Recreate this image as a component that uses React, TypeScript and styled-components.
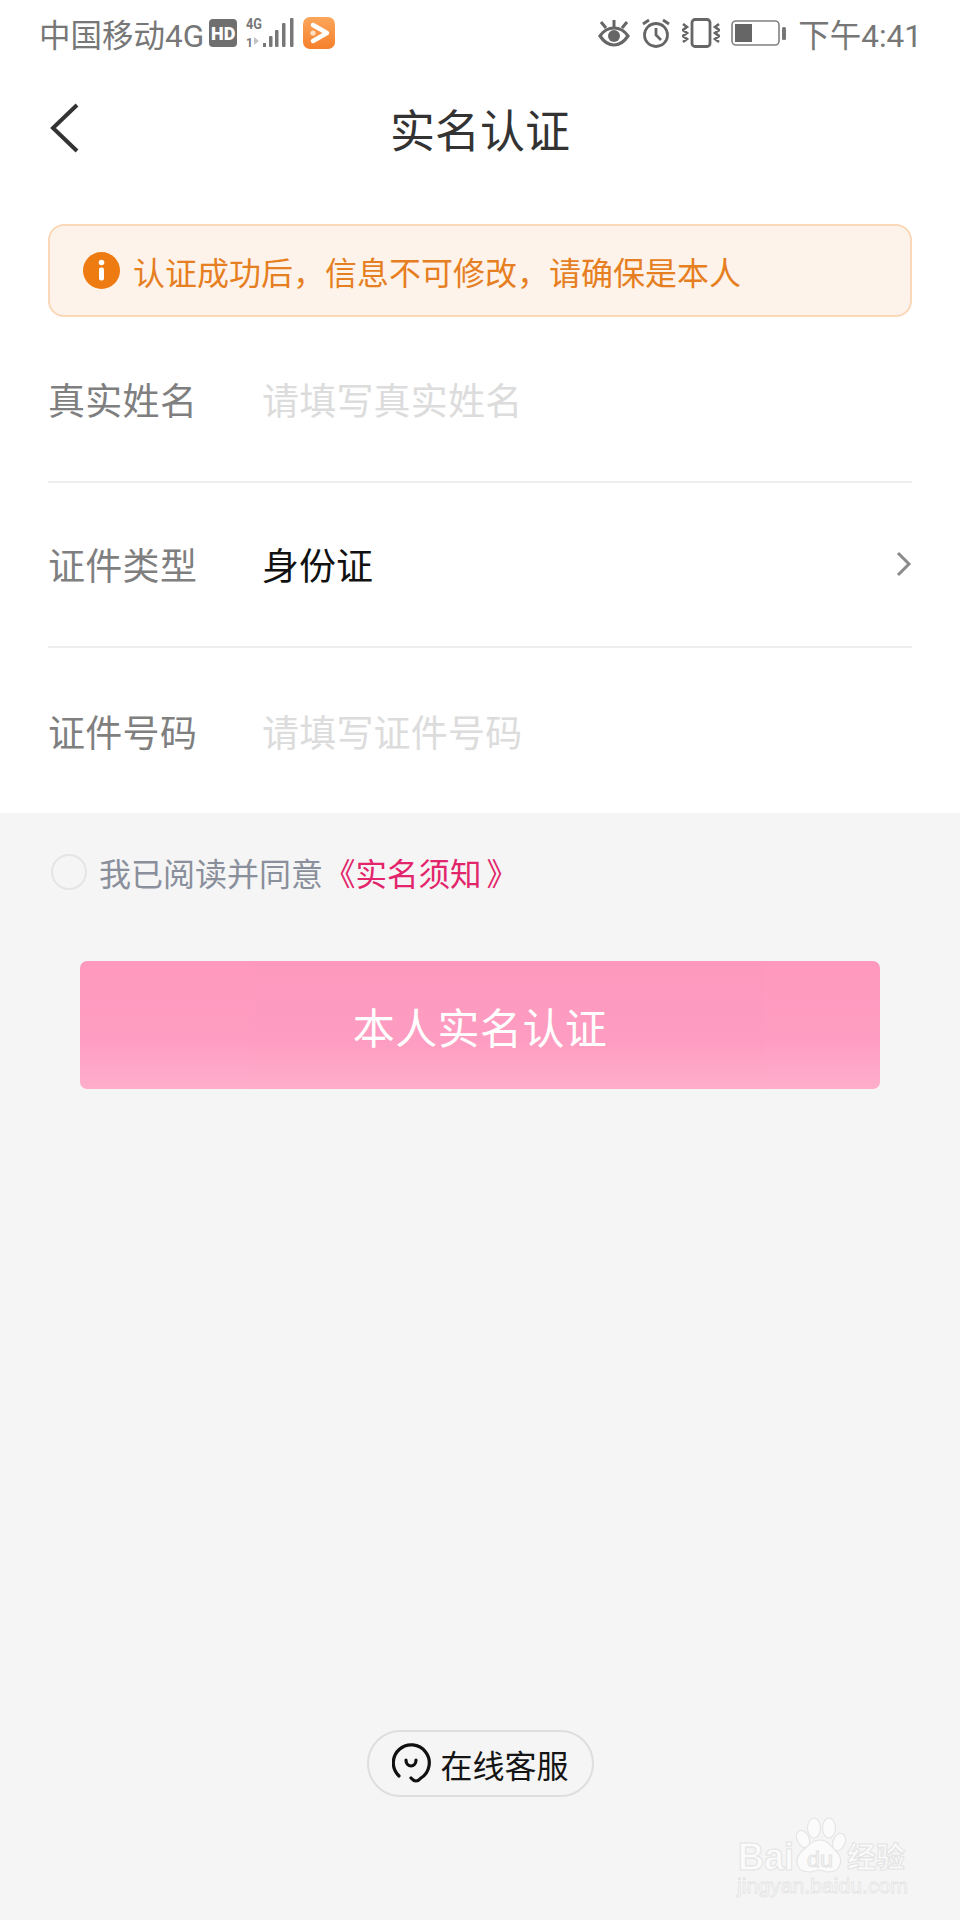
import styled, { createGlobalStyle } from 'styled-components'

const GlobalStyle = createGlobalStyle`
  html, body {
    margin: 0;
    padding: 0;
    background: #f5f5f5;
  }
  * {
    box-sizing: border-box;
  }
`

const Page = styled.div`
  position: relative;
  display: flex;
  flex-direction: column;
  width: 960px;
  height: 1920px;
  overflow: hidden;
  background: #f5f5f5;
  font-family: 'Roboto', 'Noto Sans CJK SC', sans-serif;
`
const FormPanel = styled.div`
  background: #fff;
  height: 813px;
`
const StatusBar = styled.div`
  display: flex;
  align-items: center;
  justify-content: space-between;
  height: 66px;
  padding: 0 38px 0 39px;
  color: #777;
  font-size: 31.5px;
`
const StatusGroup = styled.div<{ $gap: number }>`
  display: flex;
  align-items: center;
  gap: ${(props) => props.$gap}px;
`
const Carrier = styled.span`
  margin-right: -3px;
`
const HdBadge = styled.span`
  display: flex;
  align-items: center;
  justify-content: center;
  width: 28px;
  height: 28px;
  border-radius: 4px;
  background: #6f6f6f;
  color: #fff;
  font-size: 18px;
  font-weight: 900;
`
const AppBadge = styled.span`
  display: flex;
  align-items: center;
  justify-content: center;
  width: 32px;
  height: 32px;
  border-radius: 7px;
  background: linear-gradient(180deg, #fba65c, #f6802c);
`
const NavBar = styled.div`
  position: relative;
  display: flex;
  align-items: center;
  justify-content: center;
  height: 124px;
`
const BackIcon = styled.svg`
  position: absolute;
  left: 48px;
  top: 35px;
  width: 34px;
  height: 54px;
`
const Title = styled.h1`
  margin: 0;
  color: #333;
  font-size: 45px;
  font-weight: 400;
`
const Notice = styled.div`
  display: flex;
  align-items: center;
  gap: 13px;
  height: 93px;
  margin: 34px 48px 0;
  padding-left: 33px;
  border: 2px solid #fad8b8;
  border-radius: 16px;
  background: #fef3ea;
  color: #e67f22;
  font-size: 32px;
`
const Row = styled.div<{ $last?: boolean }>`
  display: flex;
  align-items: center;
  height: 165.5px;
  margin: 0 48px;
  border-bottom: ${(props) => (props.$last ? 'none' : '2px solid #eeeeee')};
`
const Label = styled.span`
  width: 214px;
  color: #7f7f7f;
  font-size: 37px;
  letter-spacing: 0.3px;
`
const Placeholder = styled.span`
  color: #dcdcdc;
  font-size: 37px;
  letter-spacing: 0.2px;
`
const Value = styled.span`
  flex: 1;
  color: #111;
  font-size: 37px;
`
const Agreement = styled.div`
  display: flex;
  align-items: center;
  gap: 12px;
  height: 36px;
  margin: 41px 0 0 51px;
  font-size: 32px;
  color: #8a8f9c;
`
const Radio = styled.span`
  width: 36px;
  height: 36px;
  border: 2px solid #e5e5e5;
  border-radius: 50%;
`
const AgreementLink = styled.span`
  margin-left: -11px;
  color: #e3256b;
  font-size: 31.5px;
`
const ClosingMark = styled.span`
  margin-left: 5px;
`
const SubmitButton = styled.button`
  display: block;
  width: 800px;
  height: 128px;
  margin: 71px auto 0;
  padding: 0;
  border: none;
  border-radius: 7px;
  background: linear-gradient(180deg, #ff97bc 0%, #ff9bc0 60%, #ffaccb 100%);
  color: #fff;
  font-family: inherit;
  font-size: 42px;
  letter-spacing: 0.4px;
  opacity: 0.98;
`
const ServiceButton = styled.div`
  display: flex;
  align-items: center;
  gap: 9px;
  width: 227px;
  height: 67px;
  margin: auto auto 123px;
  padding-left: 23px;
  border: 2px solid #dedede;
  border-radius: 34px;
  color: #151515;
  font-size: 32px;
`
const Watermark = styled.svg`
  position: absolute;
  right: 40px;
  bottom: 0;
  width: 195px;
  height: 110px;
`

const SignalIcon = () => (
  <svg width="50" height="34" viewBox="0 0 50 34">
    <text x="1" y="13" fontSize="15" fontWeight="700" fill="#777" fontFamily="Roboto" textLength="16" lengthAdjust="spacingAndGlyphs">4G</text>
    <text x="1" y="31" fontSize="12" fontWeight="700" fill="#777" fontFamily="Roboto">1</text>
    <path d="M9 21l5 4-5 4z" fill="#c4c4c4" />
    <rect x="18" y="27" width="3" height="4" fill="#777" />
    <rect x="24" y="20" width="3.500" height="11" rx="1" fill="#777" />
    <rect x="30" y="14" width="3.500" height="17" rx="1" fill="#777" />
    <rect x="37" y="7" width="3.500" height="24" rx="1" fill="#777" />
    <rect x="45" y="2" width="3.500" height="29" rx="1" fill="#777" />
  </svg>
)

const PlayIcon = () => (
  <svg width="24" height="24" viewBox="0 0 24 24" fill="none">
    <path d="M6 4l14 8-14 8" stroke="#fff" strokeWidth="4.500" strokeLinejoin="round" strokeLinecap="round" />
    <circle cx="6" cy="12" r="2.600" fill="#fde0c8" />
  </svg>
)

const EyeIcon = () => (
  <svg width="32" height="28" viewBox="0 0 32 28" fill="none" stroke="#666">
    <path d="M2 17c4-6 9-8 14-8s10 2 14 8c-4 6-9 9-14 9s-10-3-14-9z" strokeWidth="3.200" />
    <circle cx="16" cy="17" r="6" fill="#666" stroke="none" />
    <path d="M16 1v7M3 3l5 6M29 3l-5 6" strokeWidth="3" />
  </svg>
)

const AlarmIcon = () => (
  <svg width="30" height="30" viewBox="0 0 30 30" fill="none" stroke="#666" strokeWidth="2.800">
    <circle cx="15" cy="17" r="11.500" />
    <path d="M15 10v7l5 5M2 6l6-4M28 6l-6-4" />
  </svg>
)

const VibrateIcon = () => (
  <svg width="38" height="30" viewBox="0 0 38 30" fill="none" stroke="#666">
    <rect x="10" y="1.500" width="18" height="27" rx="3" strokeWidth="2.800" />
    <path d="M1 6l4 3-4 3 4 3-4 3 4 3-4 3M37 6l-4 3 4 3-4 3 4 3-4 3 4 3" strokeWidth="2.600" />
  </svg>
)

const BatteryIcon = () => (
  <svg width="56" height="28" viewBox="0 0 56 28">
    <rect x="1" y="2" width="47" height="24" rx="4" fill="none" stroke="#808080" strokeWidth="1.600" />
    <rect x="4" y="5" width="17" height="18" fill="#666" />
    <rect x="51" y="8" width="4" height="13" rx="1.500" fill="#777" />
  </svg>
)

const InfoIcon = () => (
  <svg width="37" height="37" viewBox="0 0 37 37">
    <circle cx="18.500" cy="18.500" r="18.500" fill="#ee7a12" />
    <circle cx="18.500" cy="10.500" r="2.800" fill="#fff" />
    <rect x="16" y="15.500" width="5" height="13" rx="2" fill="#fff" />
  </svg>
)

const ChevronIcon = () => (
  <svg width="16" height="26" viewBox="0 0 16 26" fill="none" stroke="#8a8a8a" strokeWidth="3">
    <path d="M2 2l11 11L2 24" />
  </svg>
)

const ServiceIcon = () => (
  <svg width="40" height="44" viewBox="0 0 40 44" fill="none" stroke="#111" strokeWidth="3.200" strokeLinecap="round">
    <path d="M7 34A18 18 0 1 1 29 36Q24 42 19 36" />
    <path d="M14 18c0 8 10 8 10 0" />
  </svg>
)

const BaiduWatermark = () => (
  <Watermark viewBox="0 0 195 110" fontFamily="Liberation Sans">
    <g fill="#fbfbfb" stroke="#e4e4e4" strokeWidth="1.100">
      <text x="13" y="60" fontSize="39" fontWeight="700" textLength="56" lengthAdjust="spacingAndGlyphs">Bai</text>
      <ellipse cx="78" cy="29" rx="6" ry="9" transform="rotate(-25 78 29)" />
      <ellipse cx="89" cy="18" rx="6.500" ry="10" />
      <ellipse cx="104" cy="18" rx="6.500" ry="10" />
      <ellipse cx="114" cy="32" rx="6" ry="9" transform="rotate(20 114 32)" />
      <path d="M95 30c8 0 10 6 16 11 7 6 7 21-8 21-4 0-5-2-9-2s-6 2-10 2c-13 0-15-13-8-20 7-5 10-12 19-12z" />
      <text x="82" y="57" fontSize="22" textLength="26" lengthAdjust="spacingAndGlyphs">du</text>
      <text x="122" y="58" fontSize="29" fontWeight="700" fontFamily="Noto Sans CJK SC" textLength="58">经验</text>
      <text x="12" y="83" fontSize="21" strokeWidth="0.800" textLength="171" lengthAdjust="spacingAndGlyphs">jingyan.baidu.com</text>
    </g>
  </Watermark>
)

const App = () => {
  return (
    <Page>
      <GlobalStyle />
      <FormPanel>
        <StatusBar>
          <StatusGroup $gap={8}>
            <Carrier>中国移动4G</Carrier>
            <HdBadge>HD</HdBadge>
            <SignalIcon />
            <AppBadge>
              <PlayIcon />
            </AppBadge>
          </StatusGroup>
          <StatusGroup $gap={11}>
            <EyeIcon />
            <AlarmIcon />
            <VibrateIcon />
            <BatteryIcon />
            <span>下午4:41</span>
          </StatusGroup>
        </StatusBar>
        <NavBar>
          <BackIcon viewBox="0 0 34 54" fill="none" stroke="#333" strokeWidth="4">
            <path d="M29 4L5 27l24 23" />
          </BackIcon>
          <Title>实名认证</Title>
        </NavBar>
        <Notice>
          <InfoIcon />
          <span>认证成功后，信息不可修改，请确保是本人</span>
        </Notice>
        <Row>
          <Label>真实姓名</Label>
          <Placeholder>请填写真实姓名</Placeholder>
        </Row>
        <Row>
          <Label>证件类型</Label>
          <Value>身份证</Value>
          <ChevronIcon />
        </Row>
        <Row $last>
          <Label>证件号码</Label>
          <Placeholder>请填写证件号码</Placeholder>
        </Row>
      </FormPanel>
      <Agreement>
        <Radio />
        <span>我已阅读并同意</span>
        <AgreementLink>
          《实名须知<ClosingMark>》</ClosingMark>
        </AgreementLink>
      </Agreement>
      <SubmitButton>本人实名认证</SubmitButton>
      <ServiceButton>
        <ServiceIcon />
        <span>在线客服</span>
      </ServiceButton>
      <BaiduWatermark />
    </Page>
  )
}

export default App
